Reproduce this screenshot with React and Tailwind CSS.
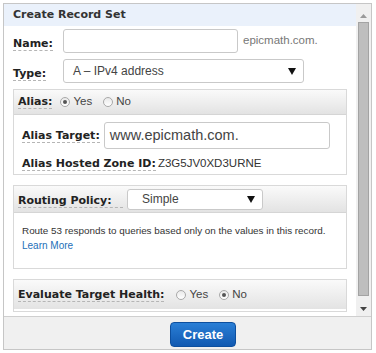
import React from "react";

const V = { fontFamily: '"DejaVu Sans", Verdana, sans-serif' };
const A = { fontFamily: '"Liberation Sans", Arial, sans-serif' };

function Label({ children, className = "" }) {
  return (
    <span
      className={"font-bold text-[11px] text-[#222] leading-[13px] border-b border-dashed border-[#b5b5b5] " + className}
      style={V}
    >
      {children}
    </span>
  );
}

function Radio({ checked, label }) {
  return (
    <span className="flex items-center gap-[3px]" style={A}>
      <span className="w-[10px] h-[10px] rounded-full border border-[#a9a9a9] bg-gradient-to-b from-[#e9e9e9] to-white flex items-center justify-center">
        {checked && <span className="w-[4px] h-[4px] rounded-full bg-[#555]" />}
      </span>
      <span className="text-[11.5px] text-[#444]">{label}</span>
    </span>
  );
}

function Caret() {
  return (
    <svg width="8" height="7" viewBox="0 0 8 7">
      <path d="M0 0 H8 L4 7 Z" fill="#111" />
    </svg>
  );
}

export default function App() {
  return (
    <div className="pt-[3px] pl-[3px] bg-white">
      <div className="w-[369px] border border-[#c6c6c6] bg-white">
        <div className="flex">
          <div className="w-[352px] h-[312px] overflow-hidden">
            <div className="h-[22px] bg-[#eaf1fb] pl-[9px] flex items-center">
              <span className="font-bold text-[11px] text-[#333]" style={V}>Create Record Set</span>
            </div>

            <div className="mt-[3px] pl-[9px] flex items-center h-[24px]">
              <div className="w-[50px]"><Label>Name:</Label></div>
              <div className="w-[175px] h-[24px] border border-[#c9c9c9] rounded-[3px] bg-white" />
              <span className="ml-[5px] text-[11.5px] text-[#777]" style={A}>epicmath.com.</span>
            </div>

            <div className="mt-[6px] pl-[9px] flex items-center h-[24px]">
              <div className="w-[50px]"><Label>Type:</Label></div>
              <div className="w-[241px] h-[24px] border border-[#c9c9c9] rounded-[3px] bg-white flex items-center justify-between pl-[9px] pr-[7px]">
                <span className="text-[12px] text-[#444]" style={A}>A – IPv4 address</span>
                <Caret />
              </div>
            </div>

            <div className="mt-[6px] mx-[9px] border border-[#d9d9d9]">
              <div className="h-[25px] bg-gradient-to-b from-[#fafafa] to-[#e3e3e3] flex items-center pl-[4px] gap-[8px] border-b border-[#d5d5d5]">
                <Label>Alias:</Label>
                <Radio checked label="Yes" />
                <span className="ml-[3px]"><Radio label="No" /></span>
              </div>
              <div className="h-[59px] bg-white pl-[8px] pt-[7px]">
                <div className="flex items-center gap-[4px]">
                  <Label>Alias Target:</Label>
                  <div className="w-[226px] h-[27px] border border-[#c9c9c9] rounded-[3px] flex items-center pl-[5px]">
                    <span className="text-[14.5px] text-[#444]" style={A}>www.epicmath.com.</span>
                  </div>
                </div>
                <div className="mt-[6px] flex items-center gap-[2px]">
                  <Label>Alias Hosted Zone ID:</Label>
                  <span className="text-[11.5px] text-[#333]" style={A}>Z3G5JV0XD3URNE</span>
                </div>
              </div>
            </div>

            <div className="mt-[10px] mx-[9px] border border-[#d9d9d9]">
              <div className="h-[27px] bg-gradient-to-b from-[#fafafa] to-[#e3e3e3] flex items-center pl-[4px] border-b border-[#d5d5d5]">
                <Label className="w-[105px] inline-block mt-[4px]">Routing Policy:</Label>
                <div className="ml-[4px] w-[136px] h-[21px] border border-[#c9c9c9] rounded-[3px] bg-white flex items-center justify-between pl-[14px] pr-[7px]">
                  <span className="text-[12px] text-[#444]" style={A}>Simple</span>
                  <Caret />
                </div>
              </div>
              <div className="h-[55px] bg-white pl-[8px] pt-[12px]" style={A}>
                <div className="text-[9.9px] text-[#333] leading-[12px]">Route 53 responds to queries based only on the values in this record.</div>
                <div className="text-[10px] text-[#1e6fb8] leading-[12px] mt-[3px]">Learn More</div>
              </div>
            </div>

            <div className="mt-[10px] mx-[9px] border border-[#d9d9d9]">
              <div className="h-[29px] bg-gradient-to-b from-[#fafafa] to-[#e3e3e3] flex items-center pl-[4px] gap-[12px]">
                <Label>Evaluate Target Health:</Label>
                <Radio label="Yes" />
                <span className="ml-[-1px]"><Radio checked label="No" /></span>
              </div>
              <div className="h-[2px] bg-white" />
            </div>
          </div>

          <div className="w-[15px] h-[312px] bg-[#f0f0f0] flex flex-col items-center">
            <svg className="mt-[10px]" width="7" height="4" viewBox="0 0 7 4">
              <path d="M0 4 L3.5 0 L7 4 Z" fill="#9a9a9a" />
            </svg>
            <div className="mt-[4px] w-[11px] h-[274px] bg-[#bebebe] border border-[#a3a3a3]" />
            <svg className="mt-[11px]" width="7" height="4" viewBox="0 0 7 4">
              <path d="M0 0 L7 0 L3.5 4 Z" fill="#444" />
            </svg>
          </div>
        </div>

        <div className="h-[33px] bg-[#f0f0f0] border-t border-[#cfcfcf] pt-[4px] pl-[166px]">
          <button
            className="w-[66px] h-[25px] rounded-[4px] border border-[#0d4f9e] bg-gradient-to-b from-[#2a7fd6] to-[#1159b1] text-white font-bold text-[13px]"
            style={A}
          >
            Create
          </button>
        </div>
      </div>
    </div>
  );
}
